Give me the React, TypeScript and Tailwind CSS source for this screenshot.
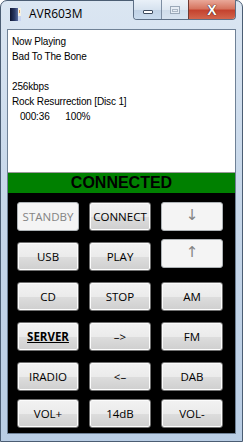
import React from "react"

type Btn = { label: string; disabled?: boolean; bold?: boolean; arrow?: boolean; mt: string }

const col1: Btn[] = [
  { label: "STANDBY", disabled: true, mt: "mt-0" },
  { label: "USB", mt: "mt-[11px]" },
  { label: "CD", mt: "mt-[11px]" },
  { label: "SERVER", bold: true, mt: "mt-[11px]" },
  { label: "IRADIO", mt: "mt-[11px]" },
  { label: "VOL+", mt: "mt-[8px]" },
]

const col2: Btn[] = [
  { label: "CONNECT", mt: "mt-0" },
  { label: "PLAY", mt: "mt-[11px]" },
  { label: "STOP", mt: "mt-[11px]" },
  { label: "–>", mt: "mt-[11px]" },
  { label: "<–", mt: "mt-[11px]" },
  { label: "14dB", mt: "mt-[8px]" },
]

const col3: Btn[] = [
  { label: "↓", disabled: true, arrow: true, mt: "mt-0" },
  { label: "↑", disabled: true, arrow: true, mt: "mt-[8px]" },
  { label: "AM", mt: "mt-[14px]" },
  { label: "FM", mt: "mt-[11px]" },
  { label: "DAB", mt: "mt-[11px]" },
  { label: "VOL-", mt: "mt-[8px]" },
]

function WinButton({ b }: { b: Btn }) {
  if (b.disabled) {
    return (
      <div
        className={`${b.mt} h-[29px] w-[62px] rounded-[3px] border border-[#adb2b5] bg-[#f4f4f4] flex items-center justify-center text-[#838383] ${
          b.arrow ? "text-[15px] pb-[2px]" : "text-[11.5px]"
        }`}
        style={b.arrow ? { fontFamily: '"DejaVu Sans", sans-serif' } : undefined}
      >
        {b.label}
      </div>
    )
  }
  return (
    <div
      className={`${b.mt} h-[29px] w-[62px] rounded-[3px] border border-[#707070] bg-[linear-gradient(to_bottom,#f2f2f2_0%,#ebebeb_50%,#dddddd_51%,#cfcfcf_100%)] shadow-[inset_0_0_0_1px_#fcfcfc] flex items-center justify-center text-[11.5px] text-black`}
    >
      <span className={b.bold ? "font-bold underline" : ""}>{b.label}</span>
    </div>
  )
}

function AppIcon() {
  return (
    <svg width="11" height="13" viewBox="0 0 11 13">
      <defs>
        <linearGradient id="tw" x1="0" x2="1" y1="0" y2="0">
          <stop offset="0" stopColor="#0e1430" />
          <stop offset="0.6" stopColor="#2b3a66" />
          <stop offset="1" stopColor="#5a6da0" />
        </linearGradient>
      </defs>
      <rect x="0" y="0" width="8" height="13" fill="url(#tw)" />
      <rect x="8" y="0" width="3" height="13" fill="#f4f1e4" />
      <rect x="8" y="8" width="3" height="5" fill="#c8d4f0" />
      <rect x="9" y="2" width="1" height="3" fill="#e8a060" />
    </svg>
  )
}

export default function App() {
  return (
    <div
      className="w-[243px] h-[442px] rounded-t-[7px] border border-[#4b5d73] bg-[linear-gradient(to_bottom,#dbe6f2_0%,#c8d8ea_40%,#b9cde4_100%)] flex flex-col"
      style={{ fontFamily: '"Open Sans", "Liberation Sans", sans-serif' }}
    >
      {/* title bar */}
      <div className="h-[28px] flex items-start pl-[9px] pr-[6px]">
        <div className="mt-[7px]">
          <AppIcon />
        </div>
        <div className="ml-[8px] mt-[4px] text-[12px] text-black">AVR603M</div>
        <div className="ml-auto -mt-[1px] flex h-[20px] rounded-b-[4px] border border-t-0 border-[#5d6f86] overflow-hidden">
          <div className="w-[27px] h-full bg-[linear-gradient(to_bottom,#e9f0f8_0%,#d6e2ef_50%,#c1d2e5_51%,#c9dbee_100%)] flex items-center justify-center">
            <div className="mt-[5px] w-[10px] h-[4px] bg-white border border-[#3d4b5e] rounded-[1px]" />
          </div>
          <div className="w-[27px] h-full border-l border-[#7d8ea3] bg-[linear-gradient(to_bottom,#eef3f9_0%,#dfe8f2_50%,#cfdcea_51%,#d7e3f0_100%)] flex items-center justify-center">
            <div className="w-[10px] h-[8px] border border-[#9aa8b8] bg-[#e6edf5] flex items-end justify-center">
              <div className="w-[6px] h-[3px] border border-[#aab6c4] mb-[1px]" />
            </div>
          </div>
          <div className="w-[47px] h-full border-l border-[#6e3a33] bg-[linear-gradient(to_bottom,#e9a899_0%,#d67560_45%,#c4432f_55%,#d2664d_100%)] flex items-center justify-center">
            <span
              className="text-[14px] font-bold text-white leading-none"
              style={{ fontFamily: '"Liberation Sans", sans-serif', textShadow: "0 0 1px #3a1a14, 0 0 1px #3a1a14" }}
            >
              X
            </span>
          </div>
        </div>
      </div>

      {/* client area */}
      <div className="mx-[6px] border border-[#6f8196] flex flex-col">
        <div
          className="h-[143px] bg-white border-b border-[#9a9a9a] pt-[4px] pl-[4px] text-[10px] leading-[15px] tracking-[-0.15px] text-black"
          style={{ fontFamily: '"Liberation Sans", Arial, sans-serif' }}
        >
          <div>Now Playing</div>
          <div>Bad To The Bone</div>
          <div>&nbsp;</div>
          <div>256kbps</div>
          <div>Rock Resurrection [Disc 1]</div>
          <div className="whitespace-pre">{"   000:36      100%"}</div>
        </div>
        <div
          className="h-[20px] bg-[#008000] flex items-center justify-center text-[16px] font-bold text-black leading-none"
          style={{ fontFamily: '"Liberation Sans", Arial, sans-serif' }}
        >
          CONNECTED
        </div>
        <div className="h-[240px] bg-black pt-[9px] pl-[9px] flex gap-[10px]">
          {[col1, col2, col3].map((col, i) => (
            <div key={i} className="flex flex-col">
              {col.map((b) => (
                <WinButton key={b.label} b={b} />
              ))}
            </div>
          ))}
        </div>
      </div>
    </div>
  )
}
